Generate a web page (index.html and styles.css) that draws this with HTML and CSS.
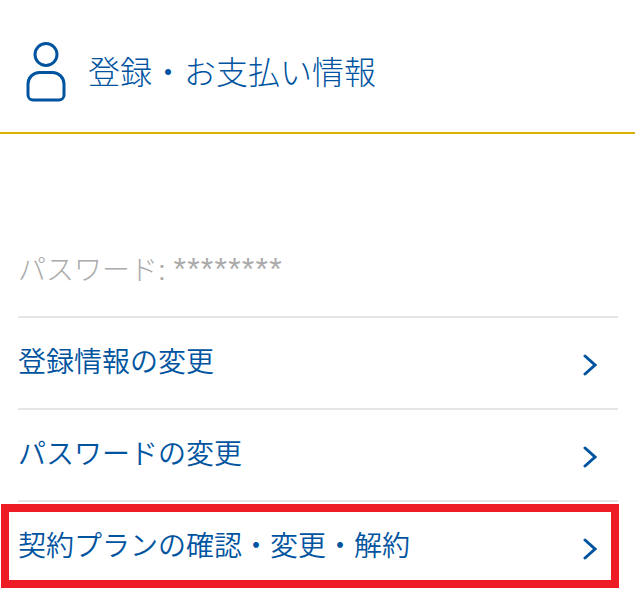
FILE: index.html
```html
<!DOCTYPE html>
<html lang="ja">

<head>
    <meta charset="UTF-8">
    <meta name="viewport" content="width=device-width, initial-scale=1.0">
    <title>登録・お支払い情報</title>
    <link rel="stylesheet" href="styles.css">
</head>

<body>
    <header class="page-header">
        <svg class="user-icon" viewBox="0 0 40 60" width="40" height="60" aria-hidden="true">
            <circle cx="20" cy="12.5" r="11" />
            <path d="M13.5 30.5h13a11.5 11.5 0 0 1 11.5 11.5v11a5 5 0 0 1-5 5h-26a5 5 0 0 1-5-5v-11a11.5 11.5 0 0 1 11.5-11.5z" />
        </svg>
        <h1>登録・お支払い情報</h1>
    </header>

    <main class="settings">
        <p class="password">パスワード: <span class="stars">********</span></p>
        <ul class="menu">
            <li class="menu-item">
                <span>登録情報の変更</span>
                <svg class="chevron" viewBox="0 0 14 22" width="14" height="22"><path d="M2 2l10 9-10 9" /></svg>
            </li>
            <li class="menu-item">
                <span>パスワードの変更</span>
                <svg class="chevron" viewBox="0 0 14 22" width="14" height="22"><path d="M2 2l10 9-10 9" /></svg>
            </li>
            <li class="menu-item highlighted">
                <span>契約プランの確認・変更・解約</span>
                <svg class="chevron" viewBox="0 0 14 22" width="14" height="22"><path d="M2 2l10 9-10 9" /></svg>
            </li>
        </ul>
    </main>
</body>

</html>
```

FILE: styles.css
```css
html,
body {
    margin: 0;
    background: white;
    font-family: "Liberation Sans", "Noto Sans CJK JP", sans-serif;
    font-weight: 350;
}

.page-header {
    display: flex;
    align-items: center;
    gap: 22px;
    height: 132px;
    padding-left: 26px;
    border-bottom: 2px solid #d9b100;
}

.user-icon {
    flex-shrink: 0;
    margin-top: 12px;
}

.user-icon circle,
.user-icon path {
    fill: none;
    stroke: #00549f;
    stroke-width: 3;
}

h1 {
    margin: 8px 0 0;
    font-size: 32px;
    font-weight: 300;
    color: #00549f;
}

.settings {
    padding: 0 17px 0 18px;
}

.password {
    margin: 0;
    padding-top: 114px;
    height: 68px;
    font-size: 28px;
    font-weight: 300;
    line-height: 42px;
    color: #aaaaaa;
}

.stars {
    font-size: 32px;
    letter-spacing: 1.2px;
}

.menu {
    list-style: none;
    margin: 0;
    padding: 0;
}

.menu-item {
    position: relative;
    display: flex;
    justify-content: space-between;
    align-items: center;
    height: 90px;
    border-top: 2px solid #e6e6e6;
    font-size: 28px;
    color: #00549f;
}

.menu-item span {
    margin-top: -6px;
}

.chevron {
    margin-right: 21px;
    margin-top: 3px;
}

.chevron path {
    fill: none;
    stroke: #00549f;
    stroke-width: 3;
    stroke-linecap: round;
}

/* red box drawn over the last row */
.highlighted::after {
    content: "";
    position: absolute;
    left: -17px;
    right: -1px;
    top: 2px;
    height: 84px;
    box-sizing: border-box;
    border: 8px solid #ee1c25;
}
```
